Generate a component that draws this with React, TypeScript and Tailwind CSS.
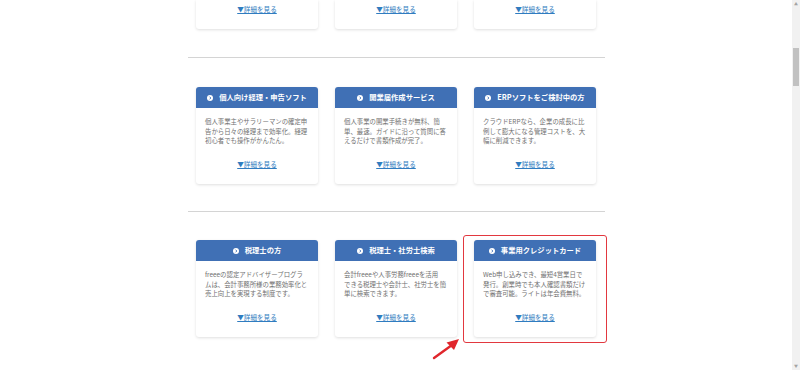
import React from 'react';

type Card = { title: string; lines: string[] };

const rowTwo: Card[] = [
  { title: '個人向け経理・申告ソフト', lines: ['個人事業主やサラリーマンの確定申', '告から日々の経理まで効率化。経理', '初心者でも操作がかんたん。'] },
  { title: '開業届作成サービス', lines: ['個人事業の開業手続きが無料、簡', '単、最速。ガイドに沿って質問に答', 'えるだけで書類作成が完了。'] },
  { title: 'ERPソフトをご検討中の方', lines: ['クラウドERPなら、企業の成長に比', '例して膨大になる管理コストを、大', '幅に削減できます。'] },
];

const rowThree: Card[] = [
  { title: '税理士の方', lines: ['freeeの認定アドバイザープログラ', 'ムは、会計事務所様の業務効率化と', '売上向上を実現する制度です。'] },
  { title: '税理士・社労士検索', lines: ['会計freeeや人事労務freeeを活用', 'できる税理士や会計士、社労士を簡', '単に検索できます。'] },
  { title: '事業用クレジットカード', lines: ['Web申し込みでき、最短4営業日で', '発行。創業時でも本人確認書類だけ', 'で審査可能。ライトは年会費無料。'] },
];

const font = { fontFamily: '"Noto Sans CJK JP", "Noto Sans", sans-serif' };

const CircleArrow = () => (
  <svg width="6" height="6" viewBox="0 0 12 12" className="shrink-0">
    <circle cx="6" cy="6" r="6" fill="#fff" />
    <path d="M5 3.3 L7.7 6 L5 8.7" stroke="#4070b5" strokeWidth="1.8" fill="none" />
  </svg>
);

const DetailLink = () => (
  <a className="text-[6.6px] leading-[10px] text-[#2f7cc0] underline decoration-[0.5px] underline-offset-1 cursor-pointer">
    ▼詳細を見る
  </a>
);

const ServiceCard = ({ card, highlight }: { card: Card; highlight?: boolean }) => (
  <div className="relative w-[122px] h-[97px] bg-white rounded-[3px] shadow-[0_1px_3px_rgba(0,0,0,0.13)] flex flex-col">
    <div className="h-[21px] bg-[#4070b5] rounded-t-[3px] flex items-center justify-center gap-[6px] text-white text-[7.3px] font-bold">
      <CircleArrow />
      <span>{card.title}</span>
    </div>
    <div className="pl-[9px] pr-[7px] pt-[9px] text-[6.4px] leading-[9.7px] text-[#707070]">
      {card.lines.map((l) => (
        <p key={l} className="whitespace-nowrap">{l}</p>
      ))}
    </div>
    <div className="mt-auto pb-[15px] flex justify-center">
      <DetailLink />
    </div>
    {highlight && (
      <>
        <div className="absolute -left-[11px] -right-[11px] -top-[5px] -bottom-[6px] border-[1.5px] border-[#e2383f] rounded-[3px] pointer-events-none" />
        <svg className="absolute -left-[42px] top-[96px]" width="32" height="26" viewBox="0 0 32 26">
          <path d="M2 22 L20 9" stroke="#e0262c" strokeWidth="2.4" strokeLinecap="round" />
          <path d="M27 3 L14.5 6.5 L22 14 Z" fill="#e0262c" />
        </svg>
      </>
    )}
  </div>
);

const CardRow = ({ cards, highlightLast }: { cards: Card[]; highlightLast?: boolean }) => (
  <div className="flex justify-center gap-[17px]">
    {cards.map((c, i) => (
      <ServiceCard key={c.title} card={c} highlight={highlightLast && i === cards.length - 1} />
    ))}
  </div>
);

export default function App() {
  return (
    <div className="w-[800px] h-[370px] bg-white flex overflow-hidden" style={font}>
      <div className="flex-1 flex flex-col items-center">
        {/* bottom of the previous row, scrolled out of view */}
        <div className="flex justify-center gap-[17px]">
          {[0, 1, 2].map((i) => (
            <div
              key={i}
              className="w-[122px] h-[29px] bg-white rounded-b-[3px] shadow-[0_1px_3px_rgba(0,0,0,0.13)] flex justify-center items-start pt-[4px]"
            >
              <DetailLink />
            </div>
          ))}
        </div>

        <div className="w-[417px] mt-[28px] border-t border-[#d4d4d4]" />

        <div className="mt-[29px]">
          <CardRow cards={rowTwo} />
        </div>

        <div className="w-[417px] mt-[27px] border-t border-[#d4d4d4]" />

        <div className="mt-[28px]">
          <CardRow cards={rowThree} highlightLast />
        </div>
      </div>

      {/* scrollbar */}
      <div className="w-[8px] h-full bg-[#f1f1f1] flex flex-col items-center">
        <div className="h-[8px] flex items-center justify-center text-[4px] text-[#a3a3a3]">▲</div>
        <div className="mt-[40px] w-[6px] h-[38px] bg-[#c1c1c1]" />
        <div className="mt-auto h-[8px] flex items-center justify-center text-[4px] text-[#a3a3a3]">▼</div>
      </div>
    </div>
  );
}
